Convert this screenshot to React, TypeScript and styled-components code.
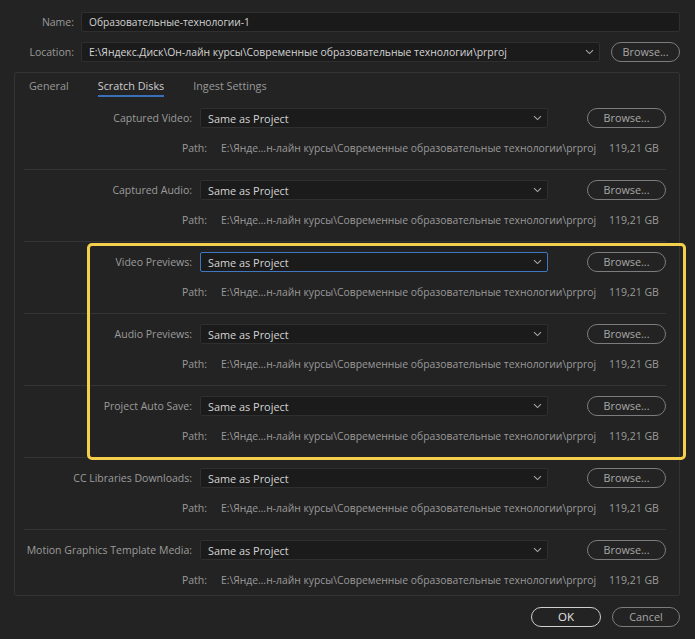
import React from "react";
import styled, { createGlobalStyle } from "styled-components";

const Global = createGlobalStyle`
  html, body { margin: 0; padding: 0; background: #232323; }
  body { font-family: "Open Sans", "Noto Sans", sans-serif; font-size: 10.5px; color: #a3a3a3; }
  * { box-sizing: border-box; }
`;

const Dialog = styled.div`
  position: relative;
  width: 695px;
  height: 639px;
  background: #232323;
  padding: 12px 15px 0 14px;
`;

const TopRow = styled.div`
  display: grid;
  grid-template-columns: 60px 1fr auto;
  column-gap: 7px;
  align-items: center;
  height: 20px;
  margin-bottom: 10px;
`;

const TopLabel = styled.div`
  text-align: right;
  color: #9a9a9a;
`;

const TextInput = styled.div<{ $span?: boolean }>`
  grid-column: ${(p) => (p.$span ? "2 / 4" : "2 / 3")};
  height: 20px;
  background: #1a1a1a;
  border: 1px solid #303030;
  border-radius: 2px;
  color: #d2d2d2;
  padding: 0 7px;
  display: flex;
  align-items: center;
  white-space: nowrap;
  overflow: hidden;
  font-size: 10.2px;
`;

const Select = styled.div<{ $focused?: boolean; $fs?: number }>`
  height: 20px;
  background: #1b1b1b;
  border: 1px solid ${(p) => (p.$focused ? "#3f78c0" : "#2f2f2f")};
  border-radius: 2px;
  color: #d4d4d4;
  padding: 0 5px 0 7px;
  display: flex;
  align-items: center;
  justify-content: space-between;
  white-space: nowrap;
  overflow: hidden;
  font-size: ${(p) => p.$fs ?? 10.9}px;
`;

const Chevron = () => (
  <svg width="9" height="6" viewBox="0 0 9 6" style={{ flexShrink: 0 }}>
    <path d="M1 1.2 L4.5 4.6 L8 1.2" fill="none" stroke="#a8a8a8" strokeWidth="1.1" />
  </svg>
);

const PillButton = styled.button<{ $w: number; $strong?: boolean }>`
  width: ${(p) => p.$w}px;
  height: 20px;
  border-radius: 10px;
  background: transparent;
  border: 1px solid ${(p) => (p.$strong ? "#cfcfcf" : "#7c7c7c")};
  color: ${(p) => (p.$strong ? "#e6e6e6" : "#a8a8a8")};
  font-family: inherit;
  font-size: ${(p) => (p.$strong ? "11.5px" : "10.8px")};
  padding: 0;
  line-height: 18px;
  cursor: pointer;
`;

const Panel = styled.div`
  width: 666px;
  height: 524px;
  border: 1px solid #333333;
  border-radius: 2px;
  background: #232323;
`;

const Tabs = styled.div`
  display: flex;
  height: 25px;
  padding-left: 14px;
  gap: 29px;
  align-items: flex-start;
  padding-top: 4px;
`;

const Tab = styled.div<{ $active?: boolean }>`
  color: ${(p) => (p.$active ? "#cfcfcf" : "#999999")};
  height: 20px;
  border-bottom: 2px solid ${(p) => (p.$active ? "#3a70b8" : "transparent")};
  line-height: 17px;
  font-size: 10.8px;
`;

const Section = styled.div<{ $last?: boolean }>`
  margin: 0 13px 0 9px;
  padding: 10px 0 ${(p) => (p.$last ? "4px" : "13px")};
  border-bottom: ${(p) => (p.$last ? "none" : "1px solid #343434")};
`;

const SelectRow = styled.div`
  display: grid;
  grid-template-columns: 168px 348px 79px;
  column-gap: 8px;
  align-items: center;
  height: 20px;
  & > :nth-child(3) { margin-left: 31px; }
`;

const RowLabel = styled.div`
  text-align: right;
  color: #9c9c9c;
  white-space: nowrap;
`;

const PathRow = styled.div`
  display: grid;
  grid-template-columns: 183px 374px auto;
  column-gap: 14px;
  align-items: center;
  height: 16px;
  margin-top: 12px;
  color: #9a9a9a;
  white-space: nowrap;
`;

const PathLabel = styled.div`
  text-align: right;
`;

const PathText = styled.div`
  font-size: 10.35px;
`;

const Footer = styled.div`
  display: flex;
  justify-content: flex-end;
  gap: 11px;
  margin-top: 11px;
  width: 666px;
`;

const Highlight = styled.div`
  position: absolute;
  left: 87px;
  top: 243px;
  width: 599px;
  height: 217px;
  border: 3px solid #f4cf4c;
  border-radius: 5px;
  pointer-events: none;
`;

const rows = [
  { label: "Captured Video:" },
  { label: "Captured Audio:" },
  { label: "Video Previews:", focused: true },
  { label: "Audio Previews:" },
  { label: "Project Auto Save:" },
  { label: "CC Libraries Downloads:" },
  { label: "Motion Graphics Template Media:" },
];

const PATH = "E:\\Янде…н-лайн курсы\\Современные образовательные технологии\\prproj";

export default function App() {
  return (
    <>
      <Global />
      <Dialog>
        <TopRow>
          <TopLabel>Name:</TopLabel>
          <TextInput $span>Образовательные-технологии-1</TextInput>
        </TopRow>
        <TopRow>
          <TopLabel>Location:</TopLabel>
          <Select $fs={10.4}>
            <span>E:\Яндекс.Диск\Он-лайн курсы\Современные образовательные технологии\prproj</span>
            <Chevron />
          </Select>
          <PillButton $w={69} style={{ marginLeft: 4 }}>Browse...</PillButton>
        </TopRow>
        <Panel>
          <Tabs>
            <Tab>General</Tab>
            <Tab $active>Scratch Disks</Tab>
            <Tab>Ingest Settings</Tab>
          </Tabs>
          {rows.map((r, i) => (
            <Section key={r.label} $last={i === rows.length - 1}>
              <SelectRow>
                <RowLabel>{r.label}</RowLabel>
                <Select $focused={r.focused}>
                  <span>Same as Project</span>
                  <Chevron />
                </Select>
                <PillButton $w={79}>Browse...</PillButton>
              </SelectRow>
              <PathRow>
                <PathLabel>Path:</PathLabel>
                <PathText>{PATH}</PathText>
                <div>119,21 GB</div>
              </PathRow>
            </Section>
          ))}
        </Panel>
        <Footer>
          <PillButton $w={70} $strong>OK</PillButton>
          <PillButton $w={68}>Cancel</PillButton>
        </Footer>
        <Highlight />
      </Dialog>
    </>
  );
}
